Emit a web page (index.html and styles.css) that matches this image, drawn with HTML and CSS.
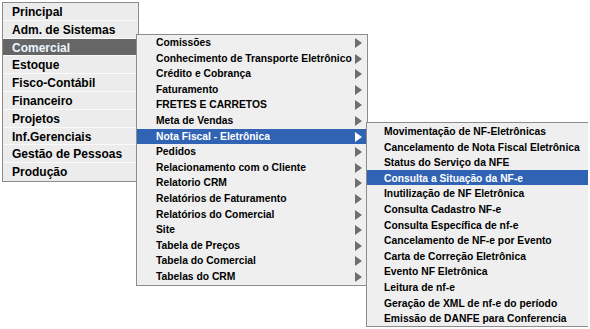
FILE: index.html
```html
<!DOCTYPE html>
<html lang="pt-BR">

<head>
    <meta charset="UTF-8">
    <title>Menu</title>
    <link rel="stylesheet" href="styles.css">
</head>

<body>
    <ul class="menu">
        <li>Principal</li>
        <li>Adm. de Sistemas</li>
        <li class="open">Comercial
            <ul class="sub sub-comercial">
                <li class="has-sub">Comissões</li>
                <li class="has-sub">Conhecimento de Transporte Eletrônico</li>
                <li class="has-sub">Crédito e Cobrança</li>
                <li class="has-sub">Faturamento</li>
                <li class="has-sub">FRETES E CARRETOS</li>
                <li class="has-sub">Meta de Vendas</li>
                <li class="has-sub open">Nota Fiscal - Eletrônica
                    <ul class="sub sub-nfe">
                        <li>Movimentação de NF-Eletrônicas</li>
                        <li>Cancelamento de Nota Fiscal Eletrônica</li>
                        <li>Status do Serviço da NFE</li>
                        <li class="open">Consulta a Situação da NF-e</li>
                        <li>Inutilização de NF Eletrônica</li>
                        <li>Consulta Cadastro NF-e</li>
                        <li>Consulta Específica de nf-e</li>
                        <li>Cancelamento de NF-e por Evento</li>
                        <li>Carta de Correção Eletrônica</li>
                        <li>Evento NF Eletrônica</li>
                        <li>Leitura de nf-e</li>
                        <li>Geração de XML de nf-e do período</li>
                        <li>Emissão de DANFE para Conferencia</li>
                    </ul>
                </li>
                <li class="has-sub">Pedidos</li>
                <li class="has-sub">Relacionamento com o Cliente</li>
                <li class="has-sub">Relatorio CRM</li>
                <li class="has-sub">Relatórios de Faturamento</li>
                <li class="has-sub">Relatórios do Comercial</li>
                <li class="has-sub">Site</li>
                <li class="has-sub">Tabela de Preços</li>
                <li class="has-sub">Tabela do Comercial</li>
                <li class="has-sub">Tabelas do CRM</li>
            </ul>
        </li>
        <li>Estoque</li>
        <li>Fisco-Contábil</li>
        <li>Financeiro</li>
        <li>Projetos</li>
        <li>Inf.Gerenciais</li>
        <li>Gestão de Pessoas</li>
        <li>Produção</li>
    </ul>
</body>

</html>
```

FILE: styles.css
```css
html {
    height: 329px;
}

body {
    margin: 2px;
    min-height: 325px;
    background-color: #fff;
    font-family: "Liberation Sans", Arial, sans-serif;
    font-weight: bold;
    color: #000;
}

ul {
    list-style: none;
    margin: 0;
    padding: 0;
}

.menu {
    width: 135px;
    border: 1px solid #8c8c8c;
    background-color: #ececec;
    font-size: 12px;
}

.menu > li {
    position: relative;
    height: 17.8px;
    line-height: 18.5px;
    padding-left: 9px;
    border-bottom: 1px solid #fafafa;
    box-sizing: border-box;
}

.menu > li:last-child {
    border-bottom: none;
}

.menu > li.open {
    background-color: #666;
    color: #eef6ff;
}

.sub {
    position: absolute;
    border: 1px solid #8c8c8c;
    background-color: #efefef;
    color: #000;
    font-size: 10.3px;
    z-index: 1;
}

.sub > li {
    position: relative;
    height: 15.6px;
    line-height: 16px;
    white-space: nowrap;
}

.sub-comercial {
    left: 133px;
    top: -4.6px;
    width: 230px;
}

.sub-comercial > li {
    padding-left: 19px;
}

.sub-nfe {
    left: 229px;
    top: -6.6px;
    width: 221px;
}

.sub-nfe > li {
    padding-left: 17px;
    line-height: 17px;
}

.sub > li.open {
    background-color: #3163b5;
    color: #fff;
}

.has-sub::after {
    content: "";
    position: absolute;
    right: 5px;
    top: 3px;
    border-left: 7px solid #6e6e6e;
    border-top: 5px solid transparent;
    border-bottom: 5px solid transparent;
}

.has-sub.open::after {
    border-left-color: #fff;
}
```
